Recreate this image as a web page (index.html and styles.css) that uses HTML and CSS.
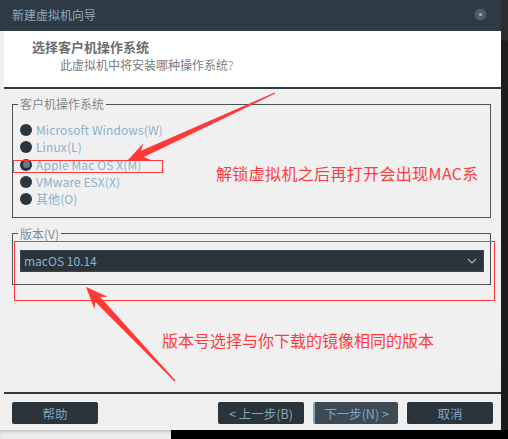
FILE: index.html
```html
<!DOCTYPE html>
<html lang="zh-CN">
<head>
<meta charset="utf-8">
<title>新建虚拟机向导</title>
<link rel="stylesheet" href="styles.css">
</head>
<body>
<div class="screen">
  <div class="toprow">
    <div class="window">
      <div class="titlebar">
        <span class="title">新建虚拟机向导</span>
        <span class="close"><span class="close-dot"></span></span>
      </div>
      <div class="main">
        <div class="header">
          <div class="h-title">选择客户机操作系统</div>
          <div class="h-sub">此虚拟机中将安装哪种操作系统<span class="q">?</span></div>
        </div>
        <div class="content">
          <fieldset class="group group-os">
            <legend>客户机操作系统</legend>
            <div class="radio"><span class="dot"></span><span class="label">Microsoft Windows(W)</span></div>
            <div class="radio"><span class="dot"></span><span class="label">Linux(L)</span></div>
            <div class="radio"><span class="dot checked"></span><span class="label">Apple Mac OS X(M)</span></div>
            <div class="radio"><span class="dot"></span><span class="label">VMware ESX(X)</span></div>
            <div class="radio"><span class="dot"></span><span class="label">其他(O)</span></div>
          </fieldset>
          <fieldset class="group group-ver">
            <legend>版本(V)</legend>
            <div class="combo">
              <span class="combo-text">macOS 10.14</span>
              <svg class="chev" width="10" height="6" viewBox="0 0 10 6"><path d="M1 1 L5 5 L9 1" fill="none" stroke="#a9b0b6" stroke-width="1.2"/></svg>
            </div>
          </fieldset>
        </div>
        <div class="footer">
          <button class="btn">帮助</button>
          <div class="spacer"></div>
          <button class="btn">&lt; 上一步(B)</button>
          <button class="btn btn-next">下一步(N) &gt;</button>
          <button class="btn">取消</button>
        </div>
      </div>
      <div class="mark mark-1"></div>
      <div class="mark mark-2"></div>
      <svg class="arrows" width="501" height="430" viewBox="0 0 501 430">
        <polygon fill="#ff3838" points="127,161 150.8,160 143.9,157.1 275.3,93.6 274.7,92.4 141,150.7 143.2,143.6"/>
        <polygon fill="#ff3838" points="86,287 107.6,296.8 100.2,296.9 175.5,380.5 174.5,381.5 95.2,301.7 94.6,309.2"/>
      </svg>
      <div class="note note-1">解锁虚拟机之后再打开会出现MAC系</div>
      <div class="note note-2">版本号选择与你下载的镜像相同的版本</div>
    </div>
    <div class="side"></div>
  </div>
  <div class="bottomrow"><div class="shadowpiece"></div></div>
</div>
</body>
</html>
```

FILE: styles.css
```css
* { box-sizing: border-box; }
html, body { margin: 0; padding: 0; }
body {
  background: #000;
  font-family: "Noto Sans CJK SC", "Noto Sans", sans-serif;
  width: 508px;
  height: 439px;
  overflow: hidden;
}
.screen { display: flex; flex-direction: column; }
.toprow { display: flex; }
.side { width: 7px; height: 430px; background: linear-gradient(#2c2c2c 0, #2c2c2c 40px, #1e1e1e 41px, #1a1a1a); }
.bottomrow { height: 9px; display: flex; }
.shadowpiece { width: 171px; height: 9px; background: #ededed; box-shadow: inset 0 3px 3px -1px rgba(0,0,0,0.18); }

.window {
  position: relative;
  width: 501px;
  height: 430px;
  display: flex;
  flex-direction: column;
  background: #f0f0f0;
}
.titlebar {
  height: 31px;
  background: #2e3a44;
  display: flex;
  align-items: center;
  justify-content: space-between;
  padding: 0 15px 2px 12px;
}
.title { color: #8fa9bc; font-size: 12px; }
.close {
  width: 11px; height: 11px; border-radius: 50%;
  background: #535e68;
  box-shadow: 0 0 2px #535e68;
  display: flex; align-items: center; justify-content: center;
  margin-top: -1px;
}
.close-dot { width: 3px; height: 3px; border-radius: 50%; background: #8dbbd8; }

.main { flex: 1; display: flex; flex-direction: column; padding-left: 4px; }
.header {
  height: 58px;
  background: #fff;
  border-bottom: 2px solid #2e3a44;
  padding: 7px 0 0 28px;
}
.h-title { font-size: 13px; line-height: 18px; font-weight: bold; color: #6b6e71; }
.h-sub { font-size: 12px; line-height: 18px; color: #7a7d80; padding-left: 28px; }
.q { color: #8fa9bc; }

.content { flex: 1; padding: 7px 10px 0 8px; }
.group {
  margin: 0;
  border: 1px solid #4d545b;
  min-width: 0;
  width: 479px;
}
.group legend {
  font-size: 12px;
  line-height: 16px;
  color: #86898c;
  padding: 0 2px;
  margin-left: -2px;
}
.group-os { padding: 9.5px 6px 9px 7px; }
.radio { display: flex; align-items: center; height: 17.25px; }
.dot {
  width: 12px; height: 12px; border-radius: 50%;
  background: #2b353e;
  display: flex; align-items: center; justify-content: center;
  margin-right: 4px;
}
.dot.checked::after {
  content: ""; width: 7px; height: 7px; border-radius: 50%; background: #66798a;
}
.label { font-size: 12px; color: #8db1cc; line-height: 16px; letter-spacing: 0.1px; }

.group-ver { margin-top: 8px; padding: 8px 6px 12px 7px; }
.combo {
  height: 22px;
  background: #2b333b;
  border: 1px solid #3a444d;
  display: flex; align-items: center; justify-content: space-between;
  padding: 0 6px 0 3px;
}
.combo-text { font-size: 12px; color: #8db1cc; }
.chev { display: block; }

.footer {
  height: 38px;
  border-top: 2px solid #2e3a44;
  display: flex;
  align-items: flex-start;
  padding: 8px 8px 0 8px;
}
.spacer { flex: 1; }
.btn {
  width: 86px; height: 22px;
  background: #2b333b;
  border: none;
  border-radius: 2px;
  color: #7fa7c4;
  font-family: inherit;
  font-size: 12.5px;
  padding: 0;
  margin: 0;
}
.btn + .btn { margin-left: 9px; }
.btn-next { background: #3d4a54; border-left: 2px solid #7ea4bf; width: 85px; }

.mark { position: absolute; border: 1px solid #ff3838; }
.mark-1 { left: 13px; top: 160px; width: 150px; height: 13px; }
.mark-2 { left: 14px; top: 241px; width: 481px; height: 60px; }
.arrows { position: absolute; left: 0; top: 0; pointer-events: none; }
.note { position: absolute; color: #ff3b3b; font-size: 16px; line-height: 20px; white-space: nowrap; }
.note-1 { left: 216px; top: 163px; letter-spacing: 0.35px; }
.note-2 { left: 162px; top: 330px; }
```
